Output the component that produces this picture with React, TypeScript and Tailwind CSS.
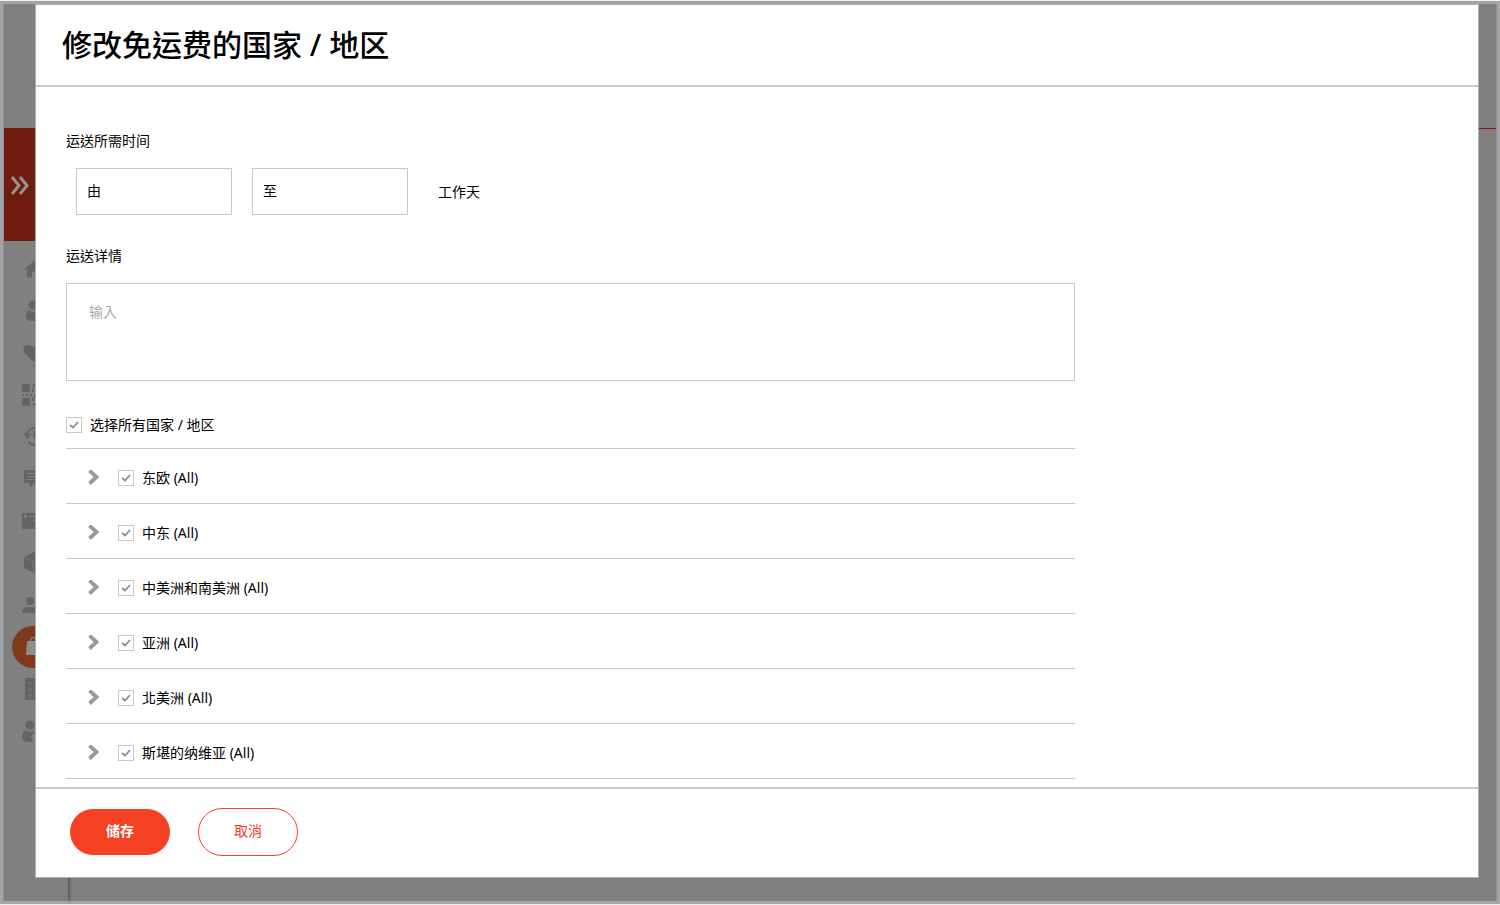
import { useState } from 'react'
import type { ReactNode } from 'react'

const REGIONS = ['东欧 (All)', '中东 (All)', '中美洲和南美洲 (All)', '亚洲 (All)', '北美洲 (All)', '斯堪的纳维亚 (All)']

const NAV: { label: string; active?: boolean; icon: ReactNode }[] = [
  { label: 'home', icon: <path d="M12 3 1.500 11.500H5v8h5v-6h4v6h5v-8h3z" /> },
  {
    label: 'profile',
    icon: (
      <>
        <circle cx="11" cy="5" r="4.500" />
        <path d="M7 10c-3 2-3 4-3 7 0 3 3 4 8 4s8-1 8-4c0-3-1-5-4-7-2 2.500-7 2.500-9 0z" />
      </>
    ),
  },
  { label: 'favourites', icon: <path d="M12 20C5 14 1.500 11 1.500 7.500 1.500 4.500 3.500 3 6.500 3c2 0 4 1 5.500 3 1-2 3-3 5-3 3 0 5 1.500 5 4.500 0 3.500-3 6.500-10 12.500z" /> },
  {
    label: 'codes',
    icon: (
      <>
        <path d="M0 0h8v8H0zM0 14h8v8H0zM14 0h8v8h-8z" />
        <path d="M0 10h2v2H0zM4 10h2v2H4zM8 10h2v2H8zM11 0h2v3h-2zM10 4h2v4h-2zM12 10h2v4h-2zM10 14h2v3h-2zM11 19h2v3h-2zM14 14h8v8h-8z" />
      </>
    ),
  },
  {
    label: 'history',
    icon: (
      <>
        <path d="M4.500 10a8 8 0 0 1 16 0 8 8 0 0 1-14 6" fill="none" stroke="currentColor" strokeWidth="2" />
        <path d="M1 6.500 5 13l5-5z" />
        <path d="M12.500 5v6l4 3" fill="none" stroke="currentColor" strokeWidth="2" />
      </>
    ),
  },
  { label: 'messages', icon: <path fillRule="evenodd" d="M2 2h19v13h-9l-4 5v-5H2zM5 5v1h13V5zM5 8v1h13V8zM5 11v1h8v-1z" /> },
  { label: 'pages', icon: <path fillRule="evenodd" d="M0 4q0-1 1-1h20v16H1q-1 0-1-1zM2 5v3h3V5zM7 6v1h13V6zM11 10v1h7v-1z" /> },
  {
    label: 'products',
    icon: (
      <>
        <path d="m12 0 10 5v11l-10 5-10-5V5z" />
        <path d="m2 5 9 5v11M22 5l-11 5" fill="none" stroke="#767676" />
      </>
    ),
  },
  {
    label: 'customers',
    icon: (
      <>
        <circle cx="8" cy="7" r="4" />
        <path d="M0 19c0-5 3-6 8-6s8 1 8 6zM14 3a4 4 0 0 1 0 8zM16 13c4 1 6 2 6 6h-4z" />
      </>
    ),
  },
  { label: 'shop', active: true, icon: <path fillRule="evenodd" d="M5 5h3a3 4 0 0 1 6 0h3l1 14H4zM9 5h4a2 3 0 0 0-4 0z" /> },
  {
    label: 'orders',
    icon: (
      <>
        <path d="M3 0h17v22H3z" />
        <path d="m6 5 1.500 1.500L10 4M6 11l1.500 1.500L10 10M6 17l1.500 1.500L10 16M12 5h5M12 11h5M12 17h5" fill="none" stroke="#808080" />
      </>
    ),
  },
  {
    label: 'partners',
    icon: (
      <>
        <circle cx="8" cy="5" r="4.500" />
        <path d="M4 10c-3 2-4 4-4 7 0 3 2 5 8 5h2l1-3-3-2 4-3-1-4c-2 2-5 2-7 0zM13 10l3 3-3 4 3 4c3 0 5-1 5-4 0-4-3-6-8-7z" />
      </>
    ),
  },
]

function CheckBox({ id, label }: { id: string; label: string }) {
  return (
    <div className="flex items-center gap-2">
      <span className="relative flex size-4">
        <input
          id={id}
          type="checkbox"
          defaultChecked
          className="peer size-4 appearance-none border border-[#c8c8c8] bg-white"
        />
        <svg viewBox="0 0 16 16" className="pointer-events-none absolute inset-0 hidden size-4 peer-checked:block">
          <path d="m4 8 3 2.500L12 5" fill="none" stroke="#8c8c8c" strokeWidth="1.800" />
        </svg>
      </span>
      <label htmlFor={id}>{label}</label>
    </div>
  )
}

function RegionRow({ name, index }: { name: string; index: number }) {
  const [open, setOpen] = useState(false)
  return (
    <li className="flex h-[55px] items-center gap-4 border-b border-[#c8c8c8] pt-1 pl-5">
      <button type="button" aria-label={name} aria-expanded={open} onClick={() => setOpen(!open)} className="flex size-4 items-center justify-center">
        <svg viewBox="0 0 16 16" className="size-4">
          <path d="m3.500 0.500 7 6.500-7 6.500" fill="none" stroke="#999" strokeWidth="3.800" />
        </svg>
      </button>
      <CheckBox id={`region-${index}`} label={name} />
    </li>
  )
}

export default function App() {
  return (
    <div className="h-screen overflow-hidden bg-[#eeeeee] py-px font-['Noto_Sans','Noto_Sans_CJK_TC',sans-serif] text-sm text-black">
      <div className="h-full border-[3px] border-[#a3a3a8]">
        <div className="relative h-full overflow-hidden border-x border-[#8e8e91] bg-[#808080]">
          {/* Page behind the dialog */}
          <div className="flex h-full">
            <aside className="flex w-16 shrink-0 flex-col shadow-[1px_0_3px_#444]">
              <div className="h-[124px] shrink-0" />
              <div className="flex h-[113px] shrink-0 items-center bg-[#6f1c0f] pl-1">
                <svg viewBox="0 0 24 24" className="size-6 text-[#94948e]">
                  <path d="m4 4 7 8.500L4 21M12 4l7 8.500-7 8.500" fill="none" stroke="currentColor" strokeWidth="3" />
                </svg>
              </div>
              <nav className="flex flex-col pt-[7px] pl-2">
                {NAV.map((item) => (
                  <a
                    key={item.label}
                    href="#"
                    aria-label={item.label}
                    className={
                      item.active
                        ? 'flex size-[42px] items-center justify-center rounded-full bg-[#80391a] text-[#8c8c8c]'
                        : 'flex size-[42px] items-center justify-center text-[#646464]'
                    }
                  >
                    <svg viewBox="0 0 22 22" className="size-[22px]" fill="currentColor">
                      {item.icon}
                    </svg>
                  </a>
                ))}
              </nav>
            </aside>
            <div className="grow pt-[124px]">
              <div className="h-px bg-[#80200f]" />
            </div>
          </div>

          {/* Dialog */}
          <section
            role="dialog"
            aria-labelledby="dialog-title"
            className="absolute top-0 right-[17px] bottom-[23px] left-[31px] flex flex-col border border-[#adadad] bg-white"
          >
            <header className="flex h-[82px] shrink-0 items-center border-b-2 border-[#cacaca] px-[26px]">
              <h1 id="dialog-title" className="text-3xl font-medium">
                修改免运费的国家 / 地区
              </h1>
            </header>

            <div className="min-h-0 grow overflow-hidden px-[30px] pt-11">
              <form className="max-w-[1009px]">
                <fieldset>
                  <legend className="leading-5">运送所需时间</legend>
                  <div className="mt-[17px] flex items-center gap-5 pl-[10px]">
                    <input aria-label="由" defaultValue="由" className="h-[47px] w-[156px] border border-[#c8c8c8] px-[10px] pb-[3px]" />
                    <input aria-label="至" defaultValue="至" className="h-[47px] w-[156px] border border-[#c8c8c8] px-[10px] pb-[3px]" />
                    <span className="pl-[10px]">工作天</span>
                  </div>
                </fieldset>

                <label htmlFor="details" className="mt-[31px] block leading-5">
                  运送详情
                </label>
                <textarea
                  id="details"
                  placeholder="输入"
                  className="mt-[17px] block h-[98px] w-full resize-none border border-[#c8c8c8] px-[22px] py-[18px] placeholder:text-[#aaa]"
                />

                <div className="mt-[34px]">
                  <CheckBox id="all" label="选择所有国家 / 地区" />
                </div>
                <ul className="mt-[13px] border-t border-[#c8c8c8]">
                  {REGIONS.map((name, i) => (
                    <RegionRow key={name} name={name} index={i} />
                  ))}
                </ul>
              </form>
            </div>

            <footer className="flex h-[90px] shrink-0 items-center gap-7 border-t-2 border-[#cacaca] px-[34px] pb-[2px]">
              <button type="button" className="h-[46px] w-[100px] rounded-full bg-[#f54123] pb-[2px] font-bold text-white">
                储存
              </button>
              <button type="button" className="h-12 w-[100px] rounded-full border border-[#f54123] pb-[2px] text-[#f54123]">
                取消
              </button>
            </footer>
          </section>
        </div>
      </div>
    </div>
  )
}
